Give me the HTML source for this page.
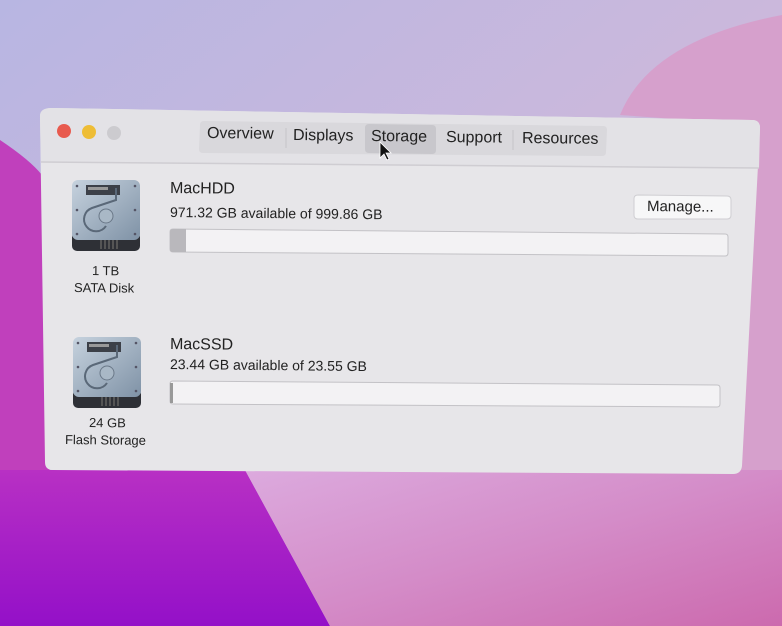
<!DOCTYPE html>
<html><head><meta charset="utf-8"><style>
body{margin:0;width:782px;height:626px;overflow:hidden;position:relative;font-family:"Liberation Sans",sans-serif;color:#222}
.t{position:absolute;white-space:nowrap;transform:rotate(0.6deg);transform-origin:left center}
</style></head><body>
<svg width="782" height="626" style="position:absolute;left:0;top:0">
<defs>
<linearGradient id="bg" x1="0" y1="0" x2="1" y2="1"><stop offset="0" stop-color="#b8b6e2"/><stop offset="0.5" stop-color="#cbb8dc"/><stop offset="1" stop-color="#d4a6d4"/></linearGradient>
<linearGradient id="mg" x1="0" y1="0" x2="0" y2="1"><stop offset="0" stop-color="#b830c4"/><stop offset="1" stop-color="#9410c8"/></linearGradient>
<linearGradient id="pk" x1="0" y1="0" x2="1" y2="1"><stop offset="0" stop-color="#dcaade"/><stop offset="0.5" stop-color="#d48cc8"/><stop offset="1" stop-color="#cc6aae"/></linearGradient>
<linearGradient id="hd" x1="0" y1="0" x2="1" y2="1"><stop offset="0" stop-color="#c6d2de"/><stop offset="1" stop-color="#7f92a6"/></linearGradient>
<g id="disk">
<rect x="0" y="52" width="68" height="19" rx="5" fill="#2e3036"/>
<g fill="#555"><rect x="28" y="60" width="2" height="9"/><rect x="32" y="60" width="2" height="9"/><rect x="36" y="60" width="2" height="9"/><rect x="40" y="60" width="2" height="9"/><rect x="44" y="60" width="2" height="9"/></g>
<rect x="0" y="0" width="68" height="60" rx="6" fill="url(#hd)"/>
<rect x="14" y="5" width="34" height="10" fill="#3c4048"/><rect x="16" y="7" width="20" height="3" fill="#999"/>
<path d="M34 46 A12 12 0 1 1 20 28 L44 20 L44 8" fill="none" stroke="#5a6878" stroke-width="2"/>
<circle cx="34" cy="36" r="7" fill="#a9b8c6" stroke="#6a7888"/>
<g fill="#556"><circle cx="5" cy="6" r="1.3"/><circle cx="63" cy="6" r="1.3"/><circle cx="5" cy="30" r="1.3"/><circle cx="63" cy="30" r="1.3"/><circle cx="5" cy="54" r="1.3"/><circle cx="63" cy="54" r="1.3"/></g>
</g>
</defs>
<rect width="782" height="626" fill="url(#bg)"/>
<path d="M620 115 Q650 40 782 15 L782 480 L740 480 L760 125Z" fill="#d6a0cc"/>
<path d="M0 140 Q30 160 42 175 L50 480 L0 480Z" fill="#c040bc"/>
<path d="M0 470 L245 470 L330 626 L0 626Z" fill="url(#mg)"/>
<path d="M245 470 L782 470 L782 626 L330 626Z" fill="url(#pk)"/>
<path d="M52 108 L752 120 Q760 120 760 128 L742 466 Q741 474 733 474 L53 470 Q45 470 45 462 L40 116 Q40 108 52 108Z" fill="#e7e6e9"/>
<path d="M40 116 Q40 108 52 108 L752 120 Q760 120 760 128 L759 168 L41 162Z" fill="#e3e2e6"/>
<line x1="41" y1="162" x2="759" y2="168" stroke="#cfcdd2" stroke-width="1.5"/>
<circle cx="64" cy="131" r="7" fill="#e85a4e"/><circle cx="89" cy="132" r="7" fill="#eebd36"/><circle cx="114" cy="133" r="7" fill="#cccbcf"/>
<path d="M204 121 L603 126 Q607 126 607 130 L606 152 Q606 156 602 156 L203 153 Q199 153 199 149 L200 125 Q200 121 204 121Z" fill="#d9d8dc"/>
<path d="M369 124 L432 125 Q436 125 436 129 L436 150 Q436 154 432 154 L369 153 Q365 153 365 149 L365 128 Q365 124 369 124Z" fill="#c8c7cc"/>
<g stroke="#c5c4c8"><line x1="286" y1="128" x2="286" y2="148"/><line x1="513" y1="130" x2="513" y2="150"/></g>
<path d="M380 142 L380 158 L384 154 L387 160 L389 159 L386 153 L391 153Z" fill="#111" stroke="#fff" stroke-width="0.8"/>
<use href="#disk" x="72" y="180"/>
<use href="#disk" x="73" y="337"/>
<path d="M638 195 L727 196 Q731 196 731 200 L731 215 Q731 219 727 219 L638 219 Q634 219 634 215 L634 199 Q634 195 638 195Z" fill="#f7f7f8" stroke="#cfced2"/>
<path d="M173 229 L725 234 Q728 234 728 237 L728 253 Q728 256 725 256 L173 252 Q170 252 170 249 L170 232 Q170 229 173 229Z" fill="#f3f2f4" stroke="#c3c2c6"/>
<path d="M173 229 L186 229 L186 252 L173 252 Q170 252 170 249 L170 232 Q170 229 173 229Z" fill="#b9b8bc"/>
<path d="M173 381 L717 385 Q720 385 720 388 L720 404 Q720 407 717 407 L173 404 Q170 404 170 401 L170 384 Q170 381 173 381Z" fill="#f3f2f4" stroke="#c3c2c6"/>
<rect x="170" y="383" width="3" height="20" fill="#999"/>
</svg>
<div class="t" style="left:207px;top:125px;font-size:16px">Overview</div>
<div class="t" style="left:293px;top:127px;font-size:16px">Displays</div>
<div class="t" style="left:371px;top:128px;font-size:16px">Storage</div>
<div class="t" style="left:446px;top:129px;font-size:16px">Support</div>
<div class="t" style="left:522px;top:130px;font-size:16px">Resources</div>
<div class="t" style="left:170px;top:180px;font-size:16px">MacHDD</div>
<div class="t" style="left:170px;top:204px;font-size:14px">971.32 GB available of 999.86 GB</div>
<div class="t" style="left:647px;top:198px;font-size:15px">Manage...</div>
<div class="t" style="left:92px;top:263px;font-size:13px">1 TB</div>
<div class="t" style="left:74px;top:280px;font-size:13px">SATA Disk</div>
<div class="t" style="left:170px;top:336px;font-size:16px">MacSSD</div>
<div class="t" style="left:170px;top:356px;font-size:14px">23.44 GB available of 23.55 GB</div>
<div class="t" style="left:89px;top:415px;font-size:13px">24 GB</div>
<div class="t" style="left:65px;top:432px;font-size:13px">Flash Storage</div>
</body></html>
